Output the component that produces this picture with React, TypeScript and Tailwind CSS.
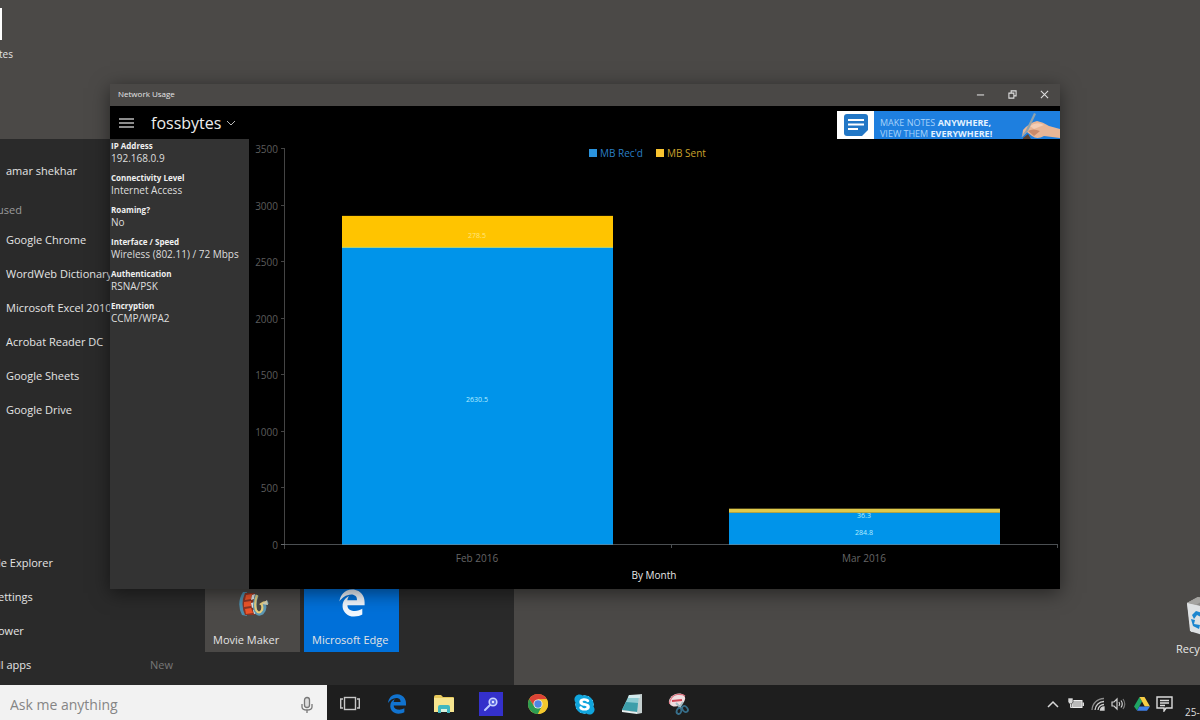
import type { ReactNode } from "react";
import { FaEdgeLegacy, FaSkype } from "react-icons/fa6";

const recentApps = [
  "Google Chrome",
  "WordWeb Dictionary",
  "Microsoft Excel 2010",
  "Acrobat Reader DC",
  "Google Sheets",
  "Google Drive",
];

const details = [
  ["IP Address", "192.168.0.9"],
  ["Connectivity Level", "Internet Access"],
  ["Roaming?", "No"],
  ["Interface / Speed", "Wireless (802.11) / 72 Mbps"],
  ["Authentication", "RSNA/PSK"],
  ["Encryption", "CCMP/WPA2"],
];

const months = [
  { name: "Feb 2016", received: 2630.5, sent: 278.5 },
  { name: "Mar 2016", received: 284.8, sent: 36.3 },
];

const AXIS_X = 36;
const BASE_Y = 406;
const PLOT_HEIGHT = 396;
const MAX = 3500;
const scale = (v: number) => (v / MAX) * PLOT_HEIGHT;

function UsageChart() {
  const ticks = [0, 500, 1000, 1500, 2000, 2500, 3000, 3500];
  return (
    <svg viewBox="0 0 811 450" className="h-full w-full" role="img" aria-label="Network usage by month">
      <g fill="#5c5c5c" stroke="none" fontSize="10" textAnchor="end">
        {ticks.map((t) => (
          <text key={t} x="29" y={BASE_Y - scale(t) + 4}>{t}</text>
        ))}
      </g>
      <g stroke="#444444" strokeWidth="1">
        {ticks.map((t) => (
          <line key={t} x1="32" x2={AXIS_X} y1={Math.round(BASE_Y - scale(t)) - 0.5} y2={Math.round(BASE_Y - scale(t)) - 0.5} />
        ))}
        <line x1="35.5" x2="35.5" y1="10" y2="410" />
      </g>
      {months.map((m, i) => {
        const x = 93 + i * 387;
        const mid = BASE_Y - scale(m.received);
        const top = mid - scale(m.sent);
        return (
          <g key={m.name} textAnchor="middle">
            <rect x={x} y={mid} width="271" height={BASE_Y - mid} fill="#0094ea" />
            <rect x={x} y={top} width="271" height={mid - top} fill={i === 0 ? "#ffc400" : "#e0c94a"} />
            {i === 0 && <line x1={x} x2={x + 271} y1={mid} y2={mid} stroke="#b9d878" strokeWidth="1" />}
            <text x={x + 135} y={(BASE_Y + mid) / 2 + 6} fontSize="7" fill="#b5ecff">{m.received}</text>
            <text x={x + 135} y={i === 0 ? 99 : 379} fontSize="7" fill={i === 0 ? "#ffe680" : "#b5ecff"}>{m.sent}</text>
            <text x={x + 135} y="423" fontSize="10" fill="#666666">{m.name}</text>
          </g>
        );
      })}
      <g stroke="#7d8488" strokeOpacity="0.6" strokeWidth="1">
        <line x1="32" x2="808" y1="405.5" y2="405.5" />
        <line x1="422.5" x2="422.5" y1="406" y2="409" />
        <line x1="808.5" x2="808.5" y1="405" y2="409" />
      </g>
      <rect x="340" y="10" width="8" height="8" fill="#2b93dd" />
      <text x="351" y="18" fontSize="10" fill="#2a7fc4">MB Rec'd</text>
      <rect x="407" y="10" width="8" height="8" fill="#f9c430" />
      <text x="418" y="18" fontSize="10" fill="#c9a22c">MB Sent</text>
      <text x="405" y="440" fontSize="10" fill="#e6e6e6" textAnchor="middle">By Month</text>
    </svg>
  );
}

function MovieMakerIcon() {
  return (
    <svg viewBox="0 0 32 26" className="h-[26px] w-8" aria-hidden="true">
      <path d="M6 1 Q-1 12 5 24 L10 25 Q5 12 10 1Z" fill="#4d8fae" />
      <path d="M8 2 Q3 13 8 24 L18 24 Q14 13 18 2Z" fill="#8d3524" />
      <path d="M9 4 L15 3 L14 8 L8 9Z M7 11 L14 10 L14 15 L7 16Z M8 18 L14 17 L16 22 L9 23Z" fill="#f0562a" />
      <path d="M15 4 L18 3 L17 8 L14 9Z M14 12 L18 11 L17 16 L15 17Z M16 19 L19 18 L20 22 L17 23Z" fill="#e4e8e9" />
      <path d="M20 4 Q17 11 18 18 Q20 25 25 22 Q29 18 27 13 L31 11" fill="none" stroke="#5d99b5" strokeWidth="3.5" />
      <path d="M20 4 Q17 12 19 19 Q22 24 25 19 Q26 14 24 13 Q26 11 30 11" fill="none" stroke="#ead17d" strokeWidth="2.2" />
      <path d="M25 13 L30 9 L31 14Z" fill="#d8d3b4" />
    </svg>
  );
}

function TaskViewIcon() {
  return (
    <svg viewBox="0 0 22 16" className="h-4 w-[22px]" fill="none" stroke="#c8c8c8" strokeWidth="1.4" aria-hidden="true">
      <rect x="5.500" y="1.500" width="11" height="12" />
      <path d="M4 3 H1.700 V12 H4 M18 3 H20.300 V12 H18" />
    </svg>
  );
}

function FolderIcon() {
  return (
    <svg viewBox="0 0 22 20" className="h-5 w-[22px]" aria-hidden="true">
      <path d="M1 3 Q1 1 3 1 H8 L10 3 H20 Q21 3 21 4 V18 H1Z" fill="#e7c95c" />
      <path d="M1 4 H21 V18 H1Z" fill="#f6e58f" />
      <path d="M5 19 V13 Q5 11 7 11 H15 Q17 11 17 13 V19 H14 V15 H8 V19Z" fill="#3fb8c0" />
      <path d="M8 15 H14 V18 H8Z" fill="#d9f2df" />
    </svg>
  );
}

function SearchAppIcon() {
  return (
    <svg viewBox="0 0 24 24" className="size-6" aria-hidden="true">
      <rect width="24" height="24" fill="#3430cb" />
      <path d="M6 18 L11 13" stroke="#bcc9ff" strokeWidth="2" strokeLinecap="round" />
      <circle cx="14" cy="10" r="3.8" fill="#5966e0" stroke="#c9d3ff" strokeWidth="1.6" />
      <circle cx="14" cy="10" r="1.2" fill="#e6eaff" />
    </svg>
  );
}

function ChromeIcon() {
  return (
    <svg viewBox="0 0 24 24" className="size-[22px]" aria-hidden="true">
      <circle cx="12" cy="12" r="11" fill="#f4c82e" />
      <path d="M2.500 6.500 A11 11 0 0 1 21.500 6.500 L12 7 L7.700 14.500Z" fill="#dc4336" />
      <path d="M2.500 6.500 A11 11 0 0 0 12 23 L16.400 14.500 L7.700 14.500Z" fill="#2c9c52" />
      <path d="M12 7 H21.800 A11 11 0 0 1 12 23 L16.300 14.500Z" fill="#f4c82e" />
      <circle cx="12" cy="12" r="5" fill="#f3f0e6" />
      <circle cx="12" cy="12" r="4" fill="#4f86e4" />
    </svg>
  );
}

function NotepadIcon() {
  return (
    <svg viewBox="0 0 24 22" className="h-[22px] w-6" aria-hidden="true">
      <path d="M10 2 L22 1 L22 20 L17 21Z" fill="#c4cfcf" />
      <path d="M9 2 L19 2 L17 19 L2 17Z" fill="#8ccbd2" />
      <path d="M6 9 L18 10 L17 19 L2 17Z" fill="#3d9eaa" />
      <path d="M2 17 L17 19 L17 21 L2 19Z" fill="#e6efef" />
      <path d="M9 2 L20 2 L20 5 L8 5Z" fill="#d3eaed" />
    </svg>
  );
}

function SnippingIcon() {
  return (
    <svg viewBox="0 0 24 24" className="size-6" aria-hidden="true">
      <ellipse cx="10" cy="8" rx="8.500" ry="6" fill="#efdde0" transform="rotate(-25 10 8)" />
      <path d="M2.500 12 Q3 4 10 2.500 Q16 2 18 4" stroke="#dc6e7b" strokeWidth="1.2" fill="none" />
      <path d="M5 9 L15 8" stroke="#cf4655" strokeWidth="2" fill="none" />
      <path d="M9 11 L15 17 M16 10 L12 16" stroke="#a5bbc2" strokeWidth="2" />
      <ellipse cx="12" cy="19" rx="2.300" ry="3" fill="none" stroke="#376f8b" strokeWidth="1.800" transform="rotate(20 12 19)" />
      <ellipse cx="18" cy="17" rx="2.400" ry="3.400" fill="none" stroke="#376f8b" strokeWidth="1.800" transform="rotate(-40 18 17)" />
    </svg>
  );
}

function RecycleBinIcon() {
  return (
    <svg viewBox="0 0 40 42" className="h-[42px] w-10" aria-hidden="true">
      <path d="M1 8 L12 2 L38 6 L34 39 L5 37Z" fill="#c9cdd0" />
      <path d="M1 8 L14 11 L38 7 L24 2 L12 2Z" fill="#8c8b89" />
      <path d="M1 8 L12 2 L20 4 L10 10Z" fill="#a5a4a1" />
      <path d="M1 8 L14 11 L16 40 L4 36Z" fill="#dfe2e4" />
      <path d="M6 20 L10 16 L16 18 L15 22 L11 20 L8 24Z M5 24 L9 25 L8 29 L14 30 L13 34 L7 31Z M14 23 L20 22 L21 31 L15 34 L14 30 L17 28Z" fill="#1d86cf" />
    </svg>
  );
}

function HandIcon() {
  return (
    <svg viewBox="0 0 40 28" className="h-7 w-10" aria-hidden="true">
      <path d="M2 26 L3 19 Q9 12 17 10 Q23 11 29 15 L40 18 V27 L24 25 Q17 29 12 25 L7 21Z" fill="#e9b696" />
      <path d="M8 20 Q13 17 20 20 L14 25Z" fill="#c98a6b" />
      <path d="M10 15 Q17 10 24 14 L14 18Z" fill="#f4ceb5" />
      <path d="M1 26 L6 19 L14 2 L16 3 L8 20Z" fill="#8fa3ad" />
      <path d="M3 27 L8 23 L11 28 H3Z" fill="#5b4335" />
    </svg>
  );
}

function WindowButton({ label, children }: { label: string; children: ReactNode }) {
  return (
    <button type="button" aria-label={label} className="flex h-full w-8 items-center justify-center">
      <svg viewBox="0 0 10 10" className="size-[9px]" fill="none" stroke="#dedede" strokeWidth="1.2" aria-hidden="true">
        {children}
      </svg>
    </button>
  );
}

function NetworkUsageWindow() {
  return (
    <section
      aria-label="Network Usage"
      className="absolute top-[84px] right-[140px] bottom-24 left-[110px] flex flex-col bg-black shadow-[0_4px_18px_rgba(0,0,0,0.5)]"
    >
      <header className="flex h-[22px] shrink-0 items-center justify-between bg-[#4a4846] pb-[2px] pl-2">
        <h1 className="text-[8px] leading-3 font-medium text-[#e6e6e6]">Network Usage</h1>
        <div className="flex h-full">
          <WindowButton label="Minimize"><path d="M1 5.500 H9" /></WindowButton>
          <WindowButton label="Restore"><path d="M1 3.500 H6.500 V9 H1Z M3.500 3 V1 H9 V6.500 H7" /></WindowButton>
          <WindowButton label="Close"><path d="M1 1 L9 9 M9 1 L1 9" /></WindowButton>
        </div>
      </header>
      <div className="flex h-[33px] shrink-0 items-center pl-[9px]">
        <button type="button" aria-label="Menu" className="flex w-[15px] flex-col gap-[2px]">
          <span className="h-[2px] w-full bg-[#8c8c8c]" />
          <span className="h-[2px] w-full bg-[#8c8c8c]" />
          <span className="h-[2px] w-full bg-[#8c8c8c]" />
        </button>
        <button type="button" className="ml-[17px] flex items-center gap-[5px] text-[16px] leading-5 text-[#ededed]">
          fossbytes
          <svg viewBox="0 0 10 6" className="h-[6px] w-[10px]" fill="none" stroke="#b8b8b8" strokeWidth="1" aria-hidden="true">
            <path d="M1 1 L5 5 L9 1" />
          </svg>
        </button>
        <a href="#notes" className="mt-[5px] ml-auto flex h-7 w-[223px] overflow-hidden bg-[#1e7fdf]">
          <span className="flex w-[37px] shrink-0 items-center justify-center bg-white">
            <svg viewBox="0 0 26 24" className="h-6 w-[26px]" aria-hidden="true">
              <path d="M4 1 H22 Q25 1 25 4 V17 L19 23 H4 Q1 23 1 20 V4 Q1 1 4 1Z" fill="#2277c6" />
              <path d="M5 7 H21 M5 11.500 H21 M5 16 H15" stroke="#fff" strokeWidth="2" />
            </svg>
          </span>
          <span className="flex-1 pt-[6px] pl-[6px] text-[9px] leading-[11px] whitespace-nowrap text-[#a6d2fa]">
            MAKE NOTES <b className="text-[#e2f1ff]">ANYWHERE,</b>
            <br />
            VIEW THEM <b className="text-[#e2f1ff]">EVERYWHERE!</b>
          </span>
          <HandIcon />
        </a>
      </div>
      <div className="flex min-h-0 flex-1">
        <dl className="w-[139px] shrink-0 bg-[#333333] pl-px">
          {details.map(([name, value]) => (
            <div key={name} className="mb-[6px]">
              <dt className="text-[8px] leading-[13px] font-bold text-[#f0f0f0]">{name}</dt>
              <dd className="text-[10px] leading-[13px] whitespace-nowrap text-[#dedede]">{value}</dd>
            </div>
          ))}
        </dl>
        <div className="min-w-0 flex-1">
          <UsageChart />
        </div>
      </div>
    </section>
  );
}

function StartMenu() {
  return (
    <nav aria-label="Start" className="absolute top-[139px] bottom-0 left-0 flex w-[514px] bg-[#2a2a2a] text-[11px] text-[#e4e4e4]">
      <div className="flex w-[149px] shrink-0 flex-col justify-between pt-[15px] pb-[3px] whitespace-nowrap">
        <div>
          <button type="button" className="flex h-[34px] items-center pl-[6px]">amar shekhar</button>
          <h2 className="mt-[10px] -ml-[3px] flex h-6 items-center text-[#9a9a9a]">used</h2>
          <div className="pt-px">
            {recentApps.map((app) => (
              <button key={app} type="button" className="flex h-[34px] items-center pl-[6px]">{app}</button>
            ))}
          </div>
        </div>
        <div className="-ml-[2px]">
          {["le Explorer", "ettings", "ower", "ll apps"].map((item) => (
            <button key={item} type="button" className="flex h-[34px] items-center">{item}</button>
          ))}
        </div>
      </div>
      <div className="flex flex-col justify-end pb-[11px]">
        <div className="flex gap-1 pl-14">
          <button type="button" className="flex h-24 w-[95px] flex-col items-start justify-end bg-[#4b4947] px-2 pb-[3px]">
            <span className="self-center"><MovieMakerIcon /></span>
            <span className="mt-[14px] leading-[18px]">Movie Maker</span>
          </button>
          <button type="button" className="flex h-24 w-[95px] flex-col items-start justify-end bg-[#0070d9] px-2 pb-[3px] whitespace-nowrap">
            <FaEdgeLegacy className="size-7 self-center text-[#f2f8ff]" />
            <span className="mt-[14px] leading-[18px]">Microsoft Edge</span>
          </button>
        </div>
        <h2 className="mt-1 pl-px leading-[18px] text-[#777777]">New</h2>
      </div>
    </nav>
  );
}

function TaskButton({ label, children }: { label: string; children: ReactNode }) {
  return (
    <button type="button" aria-label={label} className="flex h-full w-[47px] items-center justify-center pt-[3px]">
      {children}
    </button>
  );
}

function Taskbar() {
  return (
    <footer className="flex h-[35px] shrink-0 overflow-hidden bg-[#1e1e1e]">
      <label className="flex w-[327px] shrink-0 items-center bg-[#f2f2f2] pt-1 pr-[14px] pl-[10px]">
        <input
          type="text"
          aria-label="Search"
          placeholder="Ask me anything"
          className="h-6 min-w-0 flex-1 bg-transparent text-[14px] leading-6 outline-none placeholder:text-[#858585]"
        />
        <svg viewBox="0 0 12 18" className="h-[18px] w-3" fill="none" stroke="#777" strokeWidth="1.3" aria-hidden="true">
          <rect x="3.500" y="1.500" width="5" height="10" rx="2.500" fill="#ddd" />
          <path d="M1 8 V11 Q1 14 6 14 Q11 14 11 11 V8 M6 14 V17" />
        </svg>
      </label>
      <div className="-ml-px flex">
        <TaskButton label="Task View"><TaskViewIcon /></TaskButton>
        <TaskButton label="Microsoft Edge"><FaEdgeLegacy className="size-5 text-[#1173cf]" /></TaskButton>
        <TaskButton label="File Explorer"><FolderIcon /></TaskButton>
        <TaskButton label="Search app"><SearchAppIcon /></TaskButton>
        <TaskButton label="Google Chrome"><ChromeIcon /></TaskButton>
        <TaskButton label="Skype">
          <span className="flex items-center justify-center rounded-full bg-[radial-gradient(white_55%,transparent_56%)]">
            <FaSkype className="size-[23px] text-[#10a5dd]" />
          </span>
        </TaskButton>
        <TaskButton label="Notepad"><NotepadIcon /></TaskButton>
        <TaskButton label="Snipping Tool"><SnippingIcon /></TaskButton>
      </div>
      <div className="ml-auto flex items-center gap-[6px] pt-[2px]">
        <svg viewBox="0 0 12 8" className="mr-[2px] h-2 w-3" fill="none" stroke="#d8d8d8" strokeWidth="1.5" aria-hidden="true">
          <path d="M1 7 L6 2 L11 7" />
        </svg>
        <svg viewBox="0 0 17 13" className="h-[13px] w-[17px]" aria-hidden="true">
          <rect x="5" y="3.500" width="10" height="7" fill="#b9b9b9" stroke="#ededed" />
          <path d="M15.500 5.500 H17 V9 H15.500Z" fill="#ddd" />
          <path d="M1 1 H6 V5 L4.500 7 H2.500 L1 5Z" fill="#d8d8d8" stroke="#1e1e1e" strokeWidth="0.6" />
          <path d="M3.500 7 V10.500 H6" fill="none" stroke="#d8d8d8" />
        </svg>
        <svg viewBox="0 0 14 14" className="ml-px size-[14px]" fill="none" stroke="#cfcfcf" strokeWidth="1.3" aria-hidden="true">
          <path d="M1 13 A12 12 0 0 1 13 1.500" stroke="#8d8d8d" />
          <path d="M4 13 A9 9 0 0 1 13 4.500 M7 13 A6 6 0 0 1 13 7.500" />
          <path d="M9.500 13 A3.500 3.500 0 0 1 13 10 V13Z" fill="#ddd" />
        </svg>
        <svg viewBox="0 0 15 14" className="h-[14px] w-[15px]" fill="none" stroke="#cfcfcf" strokeWidth="1.2" aria-hidden="true">
          <path d="M1 5 H3 L6 2 V12 L3 9 H1Z M8 5 Q9.500 7 8 9 M10 3.500 Q12.500 7 10 10.500" />
          <path d="M12 2 Q15.500 7 12 12" stroke="#777" />
        </svg>
        <svg viewBox="0 0 16 14" className="ml-[2px] h-[14px] w-4" aria-hidden="true">
          <path d="M5.500 0 L8 4.500 L3 13.500 L0 9.500Z" fill="#1fa463" />
          <path d="M5.500 0 H10.500 L16 9.500 H10.800Z" fill="#f8ce45" />
          <path d="M5.300 9.500 H16 L13 13.800 H3Z" fill="#3f7fe8" />
        </svg>
        <svg viewBox="0 0 17 16" className="h-4 w-[17px]" fill="none" stroke="#dcdcdc" strokeWidth="1.4" aria-hidden="true">
          <path d="M1 1 H16 V12 H10 L8 15 V12 H1Z M4 4.500 H13 M4 7 H13 M4 9.500 H9" />
        </svg>
        <time className="ml-[6px] w-[15px] self-end text-[10px] leading-4 whitespace-nowrap text-[#dcdcdc]">25-</time>
      </div>
    </footer>
  );
}

export default function App() {
  return (
    <div className="flex h-screen flex-col overflow-hidden bg-[#4b4947] font-['Open_Sans','Noto_Sans',sans-serif]">
      <main className="relative min-h-0 flex-1 overflow-hidden">
        <div className="absolute top-2 left-0 flex flex-col gap-[6px] text-[10px] leading-4 text-[#e5e5e5]">
          <span className="h-8 w-[2px] bg-white" />
          <span className="-ml-px">tes</span>
        </div>
        <StartMenu />
        <div className="absolute right-0 bottom-7 flex w-6 flex-col gap-[4px] overflow-hidden text-[11px] leading-4 text-[#e8e8e8]">
          <span className="ml-[10px]"><RecycleBinIcon /></span>
          <span>Recy</span>
        </div>
        <NetworkUsageWindow />
      </main>
      <Taskbar />
    </div>
  );
}
